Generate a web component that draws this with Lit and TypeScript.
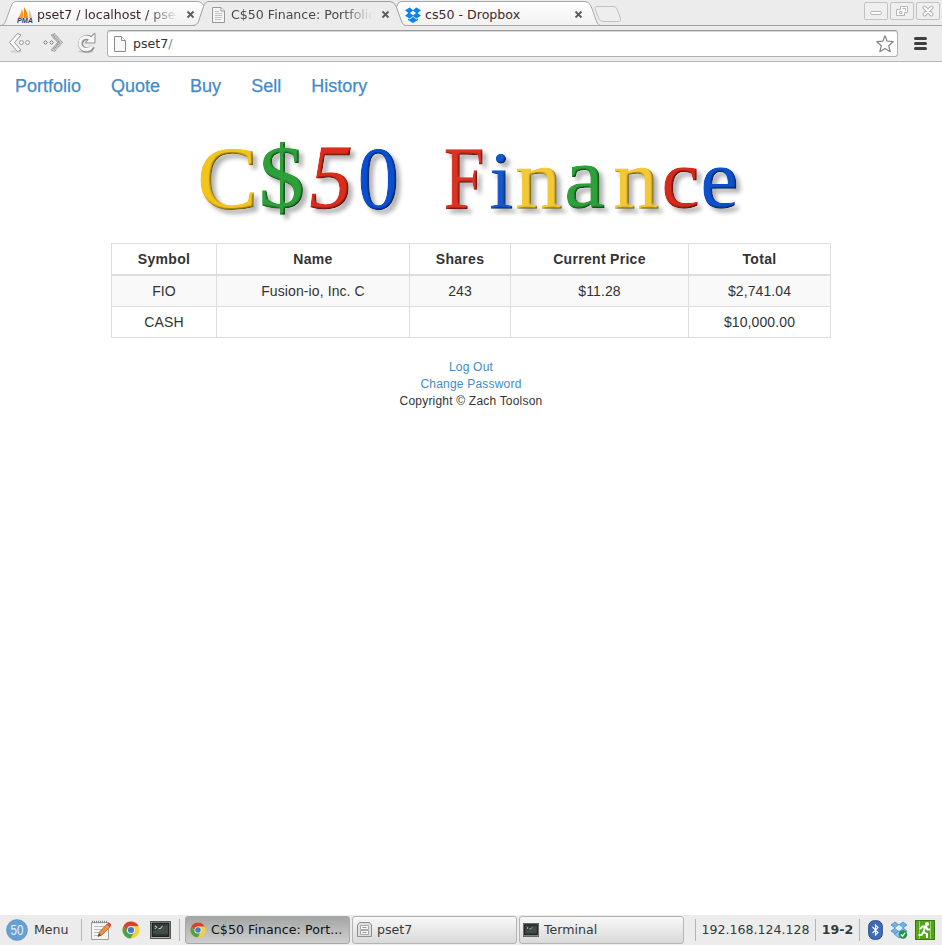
import { LitElement, html, svg, css } from "lit";
import { customElement } from "lit/decorators.js";
import { classMap } from "lit/directives/class-map.js";

// Letter, colour, drawn box (x0, x1, y0, y1) and the glyph's own box in 1/1000 em (left, right, bottom, top)
type Letter = [string, string, number, number, number, number, number, number, number, number];

const LETTERS: Letter[] = [
  ["C", "#f3c41b", 200, 255, 147, 209, 28, 633, -14, 676],
  ["$", "#2da03a", 263, 301, 142, 215, 44, 457, -87, 727],
  ["5", "#dc2c1c", 311, 352, 148, 209, 15, 491, -12, 666],
  ["0", "#0a4fd0", 360, 397, 148, 209, 24, 476, -14, 676],
  ["F", "#dc3222", 445, 484, 149, 208, 12, 546, 0, 662],
  ["i", "#1557cc", 491, 511, 153, 208, 16, 253, 0, 683],
  ["n", "#f3c935", 517, 561, 169, 208, 16, 485, 0, 460],
  ["a", "#2da03a", 568, 605, 167, 208, 37, 442, -10, 460],
  ["n", "#f3c935", 615, 658, 169, 208, 16, 485, 0, 460],
  ["c", "#d52a1c", 664, 697, 169, 208, 25, 412, -10, 460],
  ["e", "#0f50cc", 703, 737, 169, 208, 25, 424, -10, 460],
];

const ROWS = [
  ["FIO", "Fusion-io, Inc. C", "243", "$11.28", "$2,741.04"],
  ["CASH", "", "", "", "$10,000.00"],
];

const chromeIcon = (size: number) => html`<svg width=${size} height=${size} viewBox="0 0 18 18">
  <circle cx="9" cy="9" r="8.5" fill="#f7d037" />
  <path d="M1.6 4.8A8.5 8.5 0 0 1 16.5 5L9 5.2 5.3 10.5z" fill="#d8402f" />
  <path d="M1.6 4.8A8.5 8.5 0 0 0 8.4 17.5L12.4 11 9 13 5.4 11z" fill="#4ba24a" />
  <circle cx="9" cy="9" r="4" fill="#f4f4f0" />
  <circle cx="9" cy="9" r="3.1" fill="#3e7fc4" />
</svg>`;

const terminalIcon = (w: number, h: number) => html`<svg width=${w} height=${h} viewBox="0 0 20 17" preserveAspectRatio="none">
  <rect x=".5" y=".5" width="19" height="16" fill="#bdbdb8" stroke="#555753" />
  <rect x="2" y="2" width="16" height="12.5" fill="#303a36" stroke="#111" />
  <path d="M3 10L17 3v9H3z" fill="#505c56" opacity=".55" />
  <path d="M4.5 4.5l2 1.5-2 1.5M8 7h2l2-2.500" stroke="#b8c2bc" fill="none" />
</svg>`;

const closeIcon = html`<svg class="close" width="9" height="9" viewBox="0 0 9 9">
  <path d="M1.5 1.500l6 6M7.500 1.500l-6 6" stroke="#5b5b5b" stroke-width="1.800" />
</svg>`;

@customElement("browser-tabs")
class BrowserTabs extends LitElement {
  static styles = css`
    :host { display: block; position: relative; height: 26px; background: #ececec; font: 13px/26px "DejaVu Sans", sans-serif; color: #3b2a2c; }
    svg { display: block; flex: none; }
    .shapes { position: absolute; left: 0; top: 0; }
    .row { position: relative; display: flex; height: 26px; }
    .tab { display: flex; align-items: center; box-sizing: border-box; padding-top: 3px; flex: none; }
    .first { width: 199px; padding-left: 17px; }
    .second { width: 194px; padding-left: 12px; color: #45494b; }
    .third { width: 203px; padding-left: 12px; }
    .label { flex: none; white-space: nowrap; overflow: hidden; margin-left: 4px; width: 141px; font-size: 12.6px; }
    .second .label { margin-left: 5px; width: 142px; }
    .fade { -webkit-mask-image: linear-gradient(90deg, #000 78%, transparent); }
    .close { margin-left: 8px; }
    .controls { position: absolute; right: 2px; top: 2px; display: flex; gap: 2px; }
  `;
  render() {
    return html`
      <svg class="shapes" width="942" height="26" viewBox="0 0 942 26">
        <defs>
          <linearGradient id="g" x2="0" y2="1"><stop stop-color="#fff" /><stop offset="1" stop-color="#f1f1f1" /></linearGradient>
        </defs>
        <path d="M0 25.5H942" stroke="#a3a3a3" />
        <path d="M1 25.5C4 25 5 23 6 20L11 6.500Q12.500 1.500 16.500 1.500H197Q202 1.500 204 6L212 25.500z" fill="url(#g)" stroke="#a8a8a8" />
        <path d="M386 25.500L397 6Q398 1.500 401 1.500H585Q589 1.500 591 6L596 20Q597 24 600 25.500z" fill="url(#g)" stroke="#a8a8a8" />
        <path d="M193 26.500C197 25 198 23 199 20L203.500 6.500Q205 1.500 209 1.500H390Q394 1.500 396 6L401 20Q402 24 405 26.500z" fill="#ececec" />
        <path d="M193 25.500C197 25 198 23 199 20L203.500 6.500Q205 1.500 209 1.500H390Q394 1.500 396 6L401 20Q402 24 405 25.500" fill="none" stroke="#9f9f9f" />
        <path d="M597 6.500H613Q616 6.500 617 9L620 17Q621.500 21.500 618 21.500H604Q600 21.500 599 19L595.500 10Q594 6.500 597 6.500z" fill="#eee" stroke="#c0c0c0" />
      </svg>
      <div class="row">
        <div class="tab first">
          <svg width="16" height="18" viewBox="0 0 16 18">
            <path d="M1 12Q4 8 5 3Q7 8 6 12z" fill="#f6a01c" /><path d="M7 12V1Q11 7 11 12z" fill="#f58a05" /><path d="M12 12V3Q14 8 15 12z" fill="#f9bf60" />
            <text x="0" y="17" font-family="Liberation Sans" font-size="6.500" font-weight="bold" font-style="italic" fill="#34346a" textLength="16" lengthAdjust="spacingAndGlyphs">PMA</text>
          </svg>
          <span class="label fade">pset7 / localhost / pse</span>${closeIcon}
        </div>
        <div class="tab second">
          <svg width="15" height="16" viewBox="0 0 15 16">
            <path d="M1.500.500H10L13.500 4V15.500H1.500z" fill="#f4f4f2" stroke="#999" /><path d="M10 .500V4H13.500" fill="#fff" stroke="#999" />
            <path d="M4 4.500H8M4 6.500H11M4 8.500H11M4 10.500H11M4 12.500H10" stroke="#c4c4c4" />
          </svg>
          <span class="label fade">C$50 Finance: Portfolio</span>${closeIcon}
        </div>
        <div class="tab third">
          <svg width="16" height="16" viewBox="0 0 16 16">
            <path d="M4.700.500L8 3.300 11.300.500 16 3.200 12.600 6 16 8.800 11.300 11.600 8 8.900 4.700 11.600 0 8.800 3.400 6 0 3.200zM8 9.700L11.300 12.500 13 11.600V13L8 16 3 13V11.600L4.700 12.500z" fill="#0a84ee" />
            <path d="M8 3.800L11.200 6 8 8.200 4.800 6z" fill="#fdfdfd" />
          </svg>
          <span class="label">cs50 - Dropbox</span>${closeIcon}
        </div>
      </div>
      <div class="controls">
        ${[0, 1, 2].map((k) => html`<svg width="24" height="18" viewBox="0 0 24 18">
          <rect x=".5" y=".5" width="23" height="17" rx="1.500" fill="#efefef" stroke="#c2c2c2" />
          ${k === 0
            ? svg`<rect x="6.500" y="9.500" width="11" height="3" rx="1.500" fill="#fff" stroke="#b8b8b8" />`
            : k === 1
              ? svg`<path d="M10.500 4.500H17.500V10.500H14.500V13.500H6.500V7.500H10.500z" fill="#fff" stroke="#b4b4b4" /><path d="M9.500 9.500H12V11.500H9.500zM12.500 6.500H15.500V9" fill="none" stroke="#b4b4b4" />`
              : svg`<path d="M8.500 5.500l7 7M15.500 5.500l-7 7" stroke="#b4b4b4" stroke-width="4" stroke-linecap="round" /><path d="M8.500 5.500l7 7M15.500 5.500l-7 7" stroke="#fff" stroke-width="1.900" stroke-linecap="round" />`}
        </svg>`)}
      </div>`;
  }
}

@customElement("browser-toolbar")
class BrowserToolbar extends LitElement {
  static styles = css`
    :host { display: flex; box-sizing: border-box; height: 36px; padding: 4px 14px 0 8px; background: #ececec; border-bottom: 1px solid #b8b8b8; font: 12.6px "DejaVu Sans", sans-serif; }
    svg { display: block; flex: none; }
    .nav { display: flex; width: 99px; padding-top: 2px; gap: 11px; flex: none; }
    .address { box-sizing: border-box; display: flex; align-items: center; width: 791px; height: 27px; padding: 0 3px 0 6px; background: #fff; border: 1px solid #b0b0b0; border-top-color: #9c9c9c; border-radius: 3px; box-shadow: inset 0 1px #d7d7d7; color: #333; }
    .url { flex: 1; margin-left: 6px; }
    .slash { color: #888; }
    .menu { margin: 7px 0 0 16px; }
  `;
  render() {
    return html`
      <div class="nav">
        <svg width="23" height="22" viewBox="0 0 23 22">
          <ellipse cx="8" cy="19.500" rx="6" ry="1.500" fill="#d6d6d6" />
          <path d="M9.500 1.500L1.500 10.500 9.500 19.500 13 18 6.500 10.500 13 3z" fill="#fafafa" stroke="#959595" stroke-linejoin="round" />
          <circle cx="13.500" cy="10.500" r="2" fill="#f5f5f5" stroke="#999" /><circle cx="19.500" cy="10.500" r="2" fill="#f5f5f5" stroke="#999" />
        </svg>
        <svg width="23" height="22" viewBox="0 0 23 22">
          <path d="M12.500 1.500L20.500 10.500 12.500 19.500 9 18 15.500 10.500 9 3z" fill="#c9c9c9" stroke="#858585" stroke-dasharray="1 .7" />
          <path d="M11 3L17.500 10.500 11 18" fill="none" stroke="#8c8c8c" stroke-width="1.500" stroke-dasharray="1 1" />
          <path d="M1.500 10.500l2-2 2 2-2 2zM7.500 10.500l2-2 2 2-2 2z" fill="#ddd" stroke="#888" />
        </svg>
        <svg width="22" height="22" viewBox="0 0 22 22">
          <ellipse cx="10" cy="19.500" rx="8" ry="1.500" fill="#ccc" />
          <path d="M14 6.300A6.300 6.300 0 1 0 16.500 14.500" fill="none" stroke="#8f8f8f" stroke-width="5.200" />
          <path d="M18.500 2V10.500H10z" fill="#f7f7f7" stroke="#8f8f8f" stroke-width="2" stroke-linejoin="round" />
          <path d="M18.500 2V10.500H10z" fill="#f7f7f7" />
          <path d="M14.500 6.800A6.300 6.300 0 1 0 15.800 14.200" fill="none" stroke="#f7f7f7" stroke-width="3.200" />
        </svg>
      </div>
      <div class="address">
        <svg width="13" height="16" viewBox="0 0 13 16"><path d="M.500.500H7.500L11.500 4.500V15.500H.500z" fill="#f8f8f8" stroke="#8c8c8c" /><path d="M7.500.500V4.500H11.500" fill="#fff" stroke="#8c8c8c" /></svg>
        <span class="url">pset7<span class="slash">/</span></span>
        <svg width="18" height="18" viewBox="0 0 18 18"><path d="M9 .800L11.200 6.200 17.200 6.700 12.700 10.700 14.200 16.700 9 13.500 3.800 16.700 5.300 10.700.800 6.700 6.800 6.200z" fill="#fff" stroke="#858585" stroke-width="1.200" stroke-linejoin="round" /></svg>
      </div>
      <svg class="menu" width="13" height="13" viewBox="0 0 13 13"><path d="M1.500 1.500H11.500M1.500 6.500H11.500M1.500 11.500H11.500" stroke="#3f3f3f" stroke-width="3" stroke-linecap="round" /></svg>`;
  }
}

@customElement("finance-logo")
class FinanceLogo extends LitElement {
  static styles = css`
    :host { display: block; }
    svg { display: block; margin: 0 auto; }
    text { font-family: "Liberation Serif", serif; font-size: 90px; stroke-width: 1.5px; }
    .italic { font-style: italic; }
  `;
  render() {
    return html`<svg width="560" height="96" viewBox="191 132 560 96">
      <defs>
        <filter id="bevel" x="-10%" y="-20%" width="120%" height="150%" color-interpolation-filters="sRGB">
          <feGaussianBlur in="SourceAlpha" stdDeviation="1.300" result="b" />
          <feDiffuseLighting in="b" surfaceScale="1.300" diffuseConstant="1.220" lighting-color="#fff" result="l"><feDistantLight azimuth="225" elevation="55" /></feDiffuseLighting>
          <feComposite in="SourceGraphic" in2="l" operator="arithmetic" k1="1" result="c" />
          <feComposite in="c" in2="SourceAlpha" operator="in" result="d" />
          <feGaussianBlur in="SourceAlpha" stdDeviation="2" result="s" />
          <feOffset in="s" dx="4" dy="4" result="o" />
          <feComponentTransfer in="o" result="sh"><feFuncA type="linear" slope=".3" /></feComponentTransfer>
          <feMerge><feMergeNode in="sh" /><feMergeNode in="d" /></feMerge>
        </filter>
      </defs>
      <g filter="url(#bevel)">
        ${LETTERS.map(([ch, fill, x0, x1, y0, y1, l, r, b, t]) => {
          const sx = (x1 - x0) / ((r - l) * 0.09);
          const sy = (y1 - y0) / ((t - b) * 0.09);
          return svg`<text class=${classMap({ italic: ch === "5" })} fill=${fill} stroke=${fill} transform="translate(${x0 - l * 0.09 * sx} ${y1 + b * 0.09 * sy}) scale(${sx} ${sy})">${ch}</text>`;
        })}
      </g>
    </svg>`;
  }
}

@customElement("finance-page")
class FinancePage extends LitElement {
  static styles = css`
    :host { display: block; flex: 1; background: #fff; color: #333; font: 14px/20px "Liberation Sans", Arial, sans-serif; }
    a { color: #428bca; text-decoration: none; }
    .nav { display: flex; gap: 30px; height: 70px; box-sizing: border-box; padding: 14px 15px 0; font-size: 18px; -webkit-text-stroke: 0.25px #428bca; }
    .grid { display: grid; grid-template-columns: 105px 193px 101px 178px 142px; grid-template-rows: 32px 31px 31px; box-sizing: border-box; width: 720px; margin: 15px auto 0; border: solid #ddd; border-width: 1px 0 0 1px; text-align: center; }
    .cell { box-sizing: border-box; border: solid #ddd; border-width: 0 1px 1px 0; padding-top: 5px; letter-spacing: 0.1px; }
    .head { font-weight: bold; border-bottom-width: 2px; letter-spacing: 0.3px; }
    .odd { background: #f9f9f9; }
    .footer { display: flex; flex-direction: column; align-items: center; margin-top: 21px; font-size: 12px; line-height: 17px; letter-spacing: 0.2px; }
  `;
  render() {
    return html`
      <nav class="nav">${["Portfolio", "Quote", "Buy", "Sell", "History"].map((t) => html`<a>${t}</a>`)}</nav>
      <finance-logo></finance-logo>
      <div class="grid">
        ${["Symbol", "Name", "Shares", "Current Price", "Total"].map((t) => html`<div class="cell head">${t}</div>`)}
        ${ROWS.map((row, i) => row.map((t) => html`<div class=${classMap({ cell: true, odd: i === 0 })}>${t}</div>`))}
      </div>
      <footer class="footer"><a>Log Out</a><a>Change Password</a><span>Copyright © Zach Toolson</span></footer>`;
  }
}

@customElement("task-bar")
class TaskBar extends LitElement {
  static styles = css`
    :host { display: flex; align-items: center; box-sizing: border-box; height: 30px; padding-left: 6px; background: #ececec; font: 12.6px "DejaVu Sans", sans-serif; color: #333a3b; white-space: nowrap; }
    svg { display: block; flex: none; }
    span { padding-bottom: 1px; }
    .badge text { font-family: "Liberation Sans", sans-serif; }
    .menu { width: 47px; margin-left: 6px; }
    .sep { box-sizing: border-box; width: 1px; height: 22px; background: #b5b5b5; flex: none; }
    .launch { display: flex; align-items: center; width: 97px; box-sizing: border-box; padding-left: 8px; gap: 10px; }
    .tasks { display: flex; gap: 2px; margin: 0 0 1px 5px; width: 510px; }
    .task { display: flex; align-items: center; box-sizing: border-box; width: 165px; height: 28px; padding-left: 4px; gap: 5px; border: 1px solid #b4b4b4; border-radius: 3px; background: linear-gradient(#f8f8f8, #d9d9d9); }
    .task:nth-child(n + 2) { width: 165px; }
    .task span { padding: 0; }
    .active { background: linear-gradient(#a3a6a4, #cfcfcf); color: #111; border-color: #a7a7a7; margin-right: -1px; }
    .active span { letter-spacing: 0.05px; }
    .task:nth-child(2) { margin-left: 1px; }
    .task:nth-child(3) { padding-left: 3px; }
    .ip { width: 119px; text-align: center; }
    .day { width: 43px; text-align: center; font-weight: bold; }
    .tray { display: flex; align-items: center; gap: 7px; margin-left: 8px; }
  `;
  render() {
    return html`
      <svg class="badge" width="22" height="22" viewBox="0 0 22 22"><circle cx="11" cy="11" r="10.500" fill="#669fd3" stroke="#5b8fc0" stroke-width=".6" /><text x="11" y="16" text-anchor="middle" font-size="14" fill="#e4f0fa" textLength="13" lengthAdjust="spacingAndGlyphs">50</text></svg>
      <span class="menu">Menu</span><span class="sep"></span>
      <div class="launch">
        <svg width="22" height="22" viewBox="0 0 22 22">
          <path d="M1.500 3.500H18.500V20.500H1.500z" fill="#f6f6f4" stroke="#a0a09c" /><path d="M2 3H18" stroke="#888" stroke-width="2.500" stroke-dasharray="1 1" />
          <path d="M4 7.500H15M4 10.500H13M4 13.500H10M4 16.500H9" stroke="#bbb" />
          <path d="M8 17.500L9.500 13 17 5 20 8 12 16z" fill="#ee913b" stroke="#a86a3b" stroke-width=".8" /><path d="M17 5l1.500-1.500Q21.500 4 21 7L20 8z" fill="#e0434a" /><path d="M8 17.500l1-3 2 2z" fill="#444" />
        </svg>
        ${chromeIcon(18)}${terminalIcon(21, 18)}
      </div>
      <span class="sep"></span>
      <div class="tasks">
        <div class="task active">${chromeIcon(16)}<span>C$50 Finance: Port...</span></div>
        <div class="task"><svg width="15" height="17" viewBox="0 0 15 17"><path d="M2.500 1.500H12.500L14.500 4V15.500H.500V4z" fill="#dededa" stroke="#8f8f8b" /><path d="M3.500 4.500H11.500V8.500H3.500zM3.500 9.500H11.500V13.500H3.500z" fill="#f8f8f8" stroke="#aaa" /><path d="M5.500 6.500H9.500M5.500 11.500H9.500" stroke="#999" /></svg><span>pset7</span></div>
        <div class="task">${terminalIcon(16, 14)}<span>Terminal</span></div>
      </div>
      <span class="sep"></span><span class="ip">192.168.124.128</span><span class="sep"></span><span class="day">19-2</span><span class="sep"></span>
      <div class="tray">
        <svg width="15" height="20" viewBox="0 0 15 20"><rect x=".7" y=".7" width="13.600" height="18.600" rx="5.500" fill="#3e6db5" stroke="#274a87" /><path d="M4.500 7l5.500 5.500-2.500 2.500V5l2.500 2.500-5.500 5.500" fill="none" stroke="#fff" stroke-width="1.100" /></svg>
        <svg width="18" height="18" viewBox="0 0 18 18">
          <path d="M5 1L9 4 5 7 1 4zM13 1L17 4 13 7 9 4zM5 7L9 10 5 13 1 10zM13 7L17 10 13 13 9 10z" fill="#6bb4e8" stroke="#3f83ba" stroke-width=".7" /><path d="M4 13l5-3 5 3-5 4z" fill="#8cc6ee" stroke="#3f83ba" stroke-width=".7" /><path d="M5 7l4-3 4 3-4 3z" fill="#e5f3fc" />
          <circle cx="13" cy="13.500" r="4.200" fill="#209447" /><path d="M10.800 13.500l1.700 1.700 2.700-3.500" fill="none" stroke="#fff" stroke-width="1.300" />
        </svg>
        <svg width="20" height="20" viewBox="0 0 20 20"><rect x=".5" y=".5" width="19" height="19" fill="#55a51c" stroke="#39790d" /><path d="M4.500 1V19M15.500 1V19" stroke="#9bd46b" /><circle cx="12" cy="4" r="2" fill="#fff" /><path d="M5 9l2.500-2.500H11l1.500 3H15M10 7l-1.500 5 3.500 2v4M8.500 12L6.500 15H3.500" fill="none" stroke="#fff" stroke-width="2" /></svg>
      </div>`;
  }
}

@customElement("app-root")
class AppRoot extends LitElement {
  static styles = css`
    :host { display: flex; flex-direction: column; width: 942px; height: 945px; overflow: hidden; background: #fff; }
  `;
  render() {
    return html`<browser-tabs></browser-tabs><browser-toolbar></browser-toolbar><finance-page></finance-page><task-bar></task-bar>`;
  }
}
